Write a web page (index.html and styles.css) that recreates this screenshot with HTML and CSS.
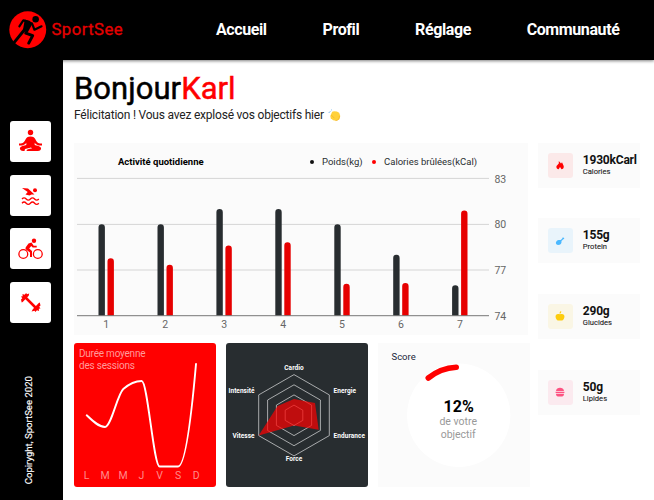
FILE: index.html
```html
<!DOCTYPE html>
<html lang="fr">
<head>
<meta charset="utf-8">
<title>SportSee</title>
<link rel="stylesheet" href="styles.css">
</head>
<body>
<header class="header">
  <div class="brand">
    <svg class="logo" viewBox="0 0 38 38">
      <circle cx="19" cy="19" r="18.700" fill="#f00"/>
      <circle cx="27" cy="8.300" r="3.300"/>
      <path d="M10.500 15.500 14.500 9.500l6 1.500M23.500 13l2.300 6 7.200-3.500" fill="none" stroke="#000" stroke-width="2.200" stroke-linejoin="round" stroke-linecap="round"/>
      <path d="m16 8.500 8.300 3.500-5.500 10-4.800-2z"/>
      <path d="M16.500 18 5.500 31.500M17 22.500l7 2.500-4 7.500" fill="none" stroke="#000" stroke-width="3" stroke-linejoin="round" stroke-linecap="round"/>
    </svg>
    <span class="brand-name">SportSee</span>
  </div>
  <nav class="nav"><a>Accueil</a><a>Profil</a><a>Réglage</a><a>Communauté</a></nav>
</header>
<div class="layout">
  <aside class="sidebar">
    <div class="tools">
      <div class="tool"><svg viewBox="0 0 41 41"><circle cx="20.500" cy="11.500" r="2.700"/><path d="M9 22.500c4 .2 5-1.200 6.500-4 1-2 2-3 5-3s4 1 5 3c1.500 2.800 2.500 4.200 6.500 4v2c-4 .3-6-1-7.300-2.800V24c5 1.200 6.800 2 6.300 4-.3 1.300-1.500 2-3 2H16.500c.2-2 2-2 5.500-2.500l-1-1-6 1.500-.5 2H13c-1.500 0-2.700-.7-3-2-.5-2 1.300-2.800 6.300-4v-2.300C15 23.500 13 24.800 9 24.500z"/></svg></div>
      <div class="tool"><svg viewBox="0 0 41 41"><circle cx="25" cy="15.300" r="2"/><path d="m12 13 6 .4 6.500 6.100h-3l-2 .9-4-1 2.200-2.400z"/><path d="M12 24q2.100-2.400 4.200 0t4.200 0 4.200 0 4.200 0M12 28.200q2.100-2.400 4.200 0t4.200 0 4.200 0 4.200 0" class="stroke"/></svg></div>
      <div class="tool"><svg viewBox="0 0 41 41"><circle cx="13.300" cy="26" r="4.400" class="stroke"/><circle cx="27.800" cy="26" r="4.400" class="stroke"/><circle cx="24" cy="12.700" r="2.200"/><path d="m18.500 15.500 3-1 2.200 3.300h3v1.700h-4l-1.500-1.500-2 2.500 2.800 2.500V29h-2v-4.500l-4-3c-1-1-.5-2 .3-3z"/></svg></div>
      <div class="tool"><svg viewBox="0 0 41 41"><path d="m14.500 14.500 12 12" stroke="#f00" stroke-width="2.500"/><path d="m11 17.500 1.300-1.300-1.300-1.700 1.700-.3-.2-2.200 2 .7 1.700-1.700.7 1.200 2.300-.7-.5 2.300-6 6.200-1 .5zM30.500 23.500l-1.300 1.300 1.300 1.700-1.700.3.200 2.200-2-.7-1.700 1.700-.7-1.200-3 .7 1.200-2.300 6-6.200 1-.5z"/></svg></div>
    </div>
    <p class="copyright">Copiryght, SportSee 2020</p>
  </aside>
  <main class="main">
    <h1 class="title">Bonjour<span>Karl</span></h1>
    <p class="subtitle">Félicitation ! Vous avez explosé vos objectifs hier
      <svg class="clap" viewBox="0 0 14 14"><path d="M2.500 7.500 4.500 3l2-.6 3 .3 2.500 1.300 1.200 3.500-1 3.700-3.200 1.500-3.500-.5L3 10z" fill="#ffd13b"/><path d="m3.500 6.500 3.500 3.500M8 12.500c3 0 4.500-2 4.300-5" stroke="#efaa22" fill="none" stroke-width=".6"/><path d="M.8 4.200 2.500 2.500M3.200 1.500 4 .8" stroke="#5faeea"/></svg>
    </p>
    <div class="dashboard">
      <div class="charts">
        <section class="card activity">
          <div class="activity-head">
            <h2>Activité quotidienne</h2>
            <ul class="legend"><li>Poids(kg)</li><li class="red">Calories brûlées(kCal)</li></ul>
          </div>
          <svg class="activity-chart" viewBox="74 170 454 165">
            <path d="M77 178.400h412M77 224.400h412M77 270h412" stroke="#d5d5d5"/>
            <g fill="#282d30">
              <path d="M98.500 315.700v-88.200a3.200 3.200 0 0 1 6.400 0v88.200zM157.500 315.700v-88.200a3.200 3.200 0 0 1 6.400 0v88.200zM216.400 315.700v-103.500a3.200 3.200 0 0 1 6.400 0v103.500zM275.300 315.700v-103.500a3.200 3.200 0 0 1 6.400 0v103.500zM334.300 315.700v-88.200a3.200 3.200 0 0 1 6.400 0v88.200zM393.200 315.700v-57.800a3.200 3.200 0 0 1 6.400 0v57.800zM452.100 315.700v-27.200a3.200 3.200 0 0 1 6.400 0v27.200z"/>
            </g>
            <g fill="#e60000">
              <path d="M107.500 315.700v-54.300a3.200 3.200 0 0 1 6.400 0v54.300zM166.500 315.700v-47.800a3.200 3.200 0 0 1 6.400 0v47.800zM225.400 315.700v-66.900a3.200 3.200 0 0 1 6.400 0v66.900zM284.300 315.700v-70.200a3.200 3.200 0 0 1 6.400 0v70.200zM343.300 315.700v-28.700a3.200 3.200 0 0 1 6.400 0v28.700zM402.200 315.700v-29.400a3.200 3.200 0 0 1 6.400 0v29.400zM461.100 315.700v-102a3.200 3.200 0 0 1 6.400 0v102z"/>
            </g>
            <path d="M77 315.700h412" stroke="#777"/>
            <g class="tick" text-anchor="middle"><text x="106.300" y="328">1</text><text x="165.200" y="328">2</text><text x="224.200" y="328">3</text><text x="283.100" y="328">4</text><text x="342" y="328">5</text><text x="401" y="328">6</text><text x="460" y="328">7</text></g>
            <g class="tick"><text x="494.400" y="182.500">83</text><text x="494.400" y="228">80</text><text x="494.400" y="273.700">77</text><text x="494.400" y="319.500">74</text></g>
          </svg>
        </section>
        <div class="row">
          <section class="sessions">
            <svg viewBox="74 343 142 144">
              <g class="sessions-title"><text x="79" y="357.300" textLength="66.500">Durée moyenne</text><text x="79" y="369" textLength="56">des sessions</text></g>
              <path d="M86.700 415.300C92.800 421.200 98.900 427 105 427c6.100 0 12.200-32.400 18.300-38 6.100-5.300 12.200-8 18.400-8 5.900 0 11.900 85.500 17.900 85.500h18.400c6 0 12-34 18-102.500" fill="none" stroke="#fff" stroke-width="1.900" stroke-linecap="round"/>
              <g class="days"><text x="86.500" y="479">L</text><text x="105" y="479">M</text><text x="123" y="479">M</text><text x="141.300" y="479">J</text><text x="159.700" y="479">V</text><text x="178" y="479">S</text><text x="196.200" y="479">D</text></g>
            </svg>
          </section>
          <section class="radar">
            <svg viewBox="226 343 142 144">
              <g fill="none" stroke="#c9cacb" stroke-width=".8"><path d="m294 374.600 35.300 20.300v40.700L294 455.900l-35.300-20.300v-40.700z"/><path d="m294 384.800 26.400 15.200v30.500L294 445.700l-26.400-15.200V400z"/><path d="m294 394.900 17.600 10.200v20.300L294 435.600l-17.600-10.200v-20.300z"/><path d="m294 405.100 8.800 5.100v10.200l-8.800 5.100-8.800-5.100v-10.200z"/></g>
              <path d="m294 399 21 4 3.700 26.700-24.700-4.200-35.300 10.100L277.500 406z" fill="#f00" fill-opacity=".7"/>
              <g class="axis"><text x="294" y="369.500" textLength="19.500">Cardio</text><text x="294" y="461.300" textLength="16.500">Force</text><g text-anchor="start"><text x="333.500" y="392.600" textLength="22.500">Energie</text><text x="333.500" y="437.800" textLength="31.500">Endurance</text></g><g text-anchor="end"><text x="254.500" y="392.600" textLength="26">Intensité</text><text x="254.500" y="437.800" textLength="22">Vitesse</text></g></g>
            </svg>
          </section>
          <section class="card score">
            <svg viewBox="378 343 152 144">
              <circle cx="458.700" cy="415.200" r="51.700" fill="#fff"/>
              <path d="M428.300 378A48 48 0 0 1 456.200 367.200" fill="none" stroke="#f00" stroke-width="5.600" stroke-linecap="round"/>
              <text class="score-title" x="391.500" y="360">Score</text>
              <text class="score-value" x="458.700" y="412.200">12%</text>
              <g class="score-note"><text x="458.200" y="425.300">de votre</text><text x="458.200" y="438">objectif</text></g>
            </svg>
          </section>
        </div>
      </div>
      <div class="facts">
        <article class="card fact"><div class="badge calories"><svg viewBox="0 0 10 10"><path d="M3.800 1 6 3.500 7 2.300 8.700 6c.5 2-1 3.300-2.200 3.300L5 7 3.700 9.300C2 9.300 1 7.500 1.500 6L3.800 3.500z"/></svg></div><div><h3>1930kCarl</h3><p>Calories</p></div></article>
        <article class="card fact"><div class="badge protein"><svg viewBox="0 0 10 10"><path d="M1.500 5.200C3 3.500 4.500 4 5.700 4L7.300 2.500c-.2-1 1-1.500 1.300-.7 1 .2.800 1.600-.3 1.500L6.500 5c.3 2.500-1 4-3.500 4C.8 8.700.3 6.700 1.500 5.200z"/></svg></div><div><h3>155g</h3><p>Protein</p></div></article>
        <article class="card fact"><div class="badge glucides"><svg viewBox="0 0 10 10"><path d="M5 3.200c4-1.200 5.200 1.300 4 4.300C8 9.900 6.500 9.700 5 9.500 3.500 9.700 2 9.900 1 7.500-.2 4.500 1 2 5 3.200zM4.700 2.800C4.400 1.200 5 .3 6.200.3c.2 1.400-.4 2.300-1.500 2.500z"/></svg></div><div><h3>290g</h3><p>Glucides</p></div></article>
        <article class="card fact"><div class="badge lipides"><svg viewBox="0 0 10 10"><path d="M1 4C1.300-.3 8.700-.3 9 4zM.6 4.800h8.800V6H.6zM1 6.800h8c0 1.900-.8 2.700-2 2.700H3C1.800 9.500 1 8.700 1 6.800z"/></svg></div><div><h3>50g</h3><p>Lipides</p></div></article>
      </div>
    </div>
  </main>
</div>
</body>
</html>
```
FILE: styles.css
```css
* { box-sizing: border-box; }
body { margin: 0; height: 500px; overflow: hidden; background: #fff; font-family: Roboto, sans-serif; color: #000; }
h1, h2, h3, p, ul { margin: 0; padding: 0; }
svg { display: block; }
.header { display: flex; align-items: center; height: 59.5px; background: #000; box-shadow: 0 1px 3px rgba(0, 0, 0, .5); }
.brand { display: flex; align-items: center; width: 216px; padding-left: 9px; gap: 5px; }
.logo { width: 37.500px; height: 37.500px; }
.brand-name { color: #e60000; font-size: 16.700px; letter-spacing: .45px; -webkit-text-stroke: .3px #e60000; }
.nav { display: flex; gap: 55.800px; color: #fff; font-size: 16px; font-weight: 700; letter-spacing: -.4px; }
.layout { display: flex; height: 440.500px; }
.sidebar { display: flex; flex-direction: column; justify-content: space-between; width: 63.300px; padding: 61.500px 0 15.500px 10px; background: #000; }
.tools { display: grid; gap: 12.700px; }
.tool { width: 41px; height: 41px; border-radius: 3px; background: #fff; }
.tool svg { fill: #f00; }
.tool .stroke { fill: none; stroke: #f00; stroke-width: 1.300; }
.copyright { margin-left: 12px; color: #fff; font-size: 9.600px; line-height: 13px; writing-mode: vertical-rl; transform: rotate(180deg); width: 13px; -webkit-text-stroke: .15px #fff; }
.main { flex: 1; padding: 12.500px 0 0 10.700px; }
.title { font-size: 31px; line-height: 34px; font-weight: 400; letter-spacing: .05px; -webkit-text-stroke: .5px currentColor; }
.title span { color: #f00; }
.subtitle { display: flex; align-items: center; gap: 4px; height: 16px; margin-top: 1px; font-size: 12px; letter-spacing: -.21px; color: #222; white-space: nowrap; }
.clap { width: 13px; height: 13px; }
.dashboard { display: flex; gap: 10px; margin-top: 19.500px; }
.charts { width: 454px; }
.card { background: #fbfbfb; }
.activity { height: 192.500px; }
.activity-head { display: flex; height: 27.500px; padding: 11px 0 0 44px; line-height: 16px; font-size: 9.500px; }
.activity-head h2 { width: 192px; font-size: 9.500px; font-weight: 700; }
.legend { display: flex; gap: 9.500px; list-style: none; color: #282d30; }
.legend li { display: flex; align-items: center; gap: 8px; white-space: nowrap; }
.legend li::before { content: ""; width: 4px; height: 4px; border-radius: 50%; background: #111; }
.legend .red::before { background: #f00; }
.activity-chart { width: 454px; height: 165px; }
.tick { font-size: 10.500px; fill: #666; }
.row { display: flex; gap: 10px; width: 456px; margin-top: 8px; }
.row section { height: 144px; border-radius: 3px; }
.row .score { border-radius: 0; }
.sessions, .radar { width: 142px; overflow: hidden; }
.sessions { background: #f00; }
.radar { background: #282d30; }
.score { width: 152px; }
.sessions-title { font-size: 10px; fill: #ff9a9a; }
.days { font-size: 10.500px; fill: #ff8a8a; text-anchor: middle; }
.axis { font-size: 6.500px; font-weight: 700; fill: #fff; text-anchor: middle; }
.score-title { font-size: 9.500px; fill: #20253a; }
.score-value { font-size: 16px; font-weight: 700; text-anchor: middle; }
.score-note { font-size: 10.500px; fill: #999; text-anchor: middle; }
.facts { display: grid; gap: 30.500px; align-content: start; width: 102px; }
.fact { display: flex; align-items: center; gap: 10px; width: 102px; height: 45.200px; padding-left: 9.800px; }
.fact h3 { font-size: 12px; line-height: 13px; font-weight: 700; letter-spacing: -.2px; color: #111; }
.fact p { font-size: 7.600px; line-height: 10px; color: #222; -webkit-text-stroke: .1px #222; }
.badge { flex: none; display: grid; place-items: center; width: 25px; height: 25px; border-radius: 3px; }
.badge svg { width: 10px; height: 10px; fill: currentColor; }
.calories { color: #f00; background: #fbe9e9; }
.protein { color: #4ab8ff; background: #e9f4fb; }
.glucides { color: #fdcc0c; background: #faf6e5; }
.lipides { color: #fd5181; background: #fbeaef; }
```
